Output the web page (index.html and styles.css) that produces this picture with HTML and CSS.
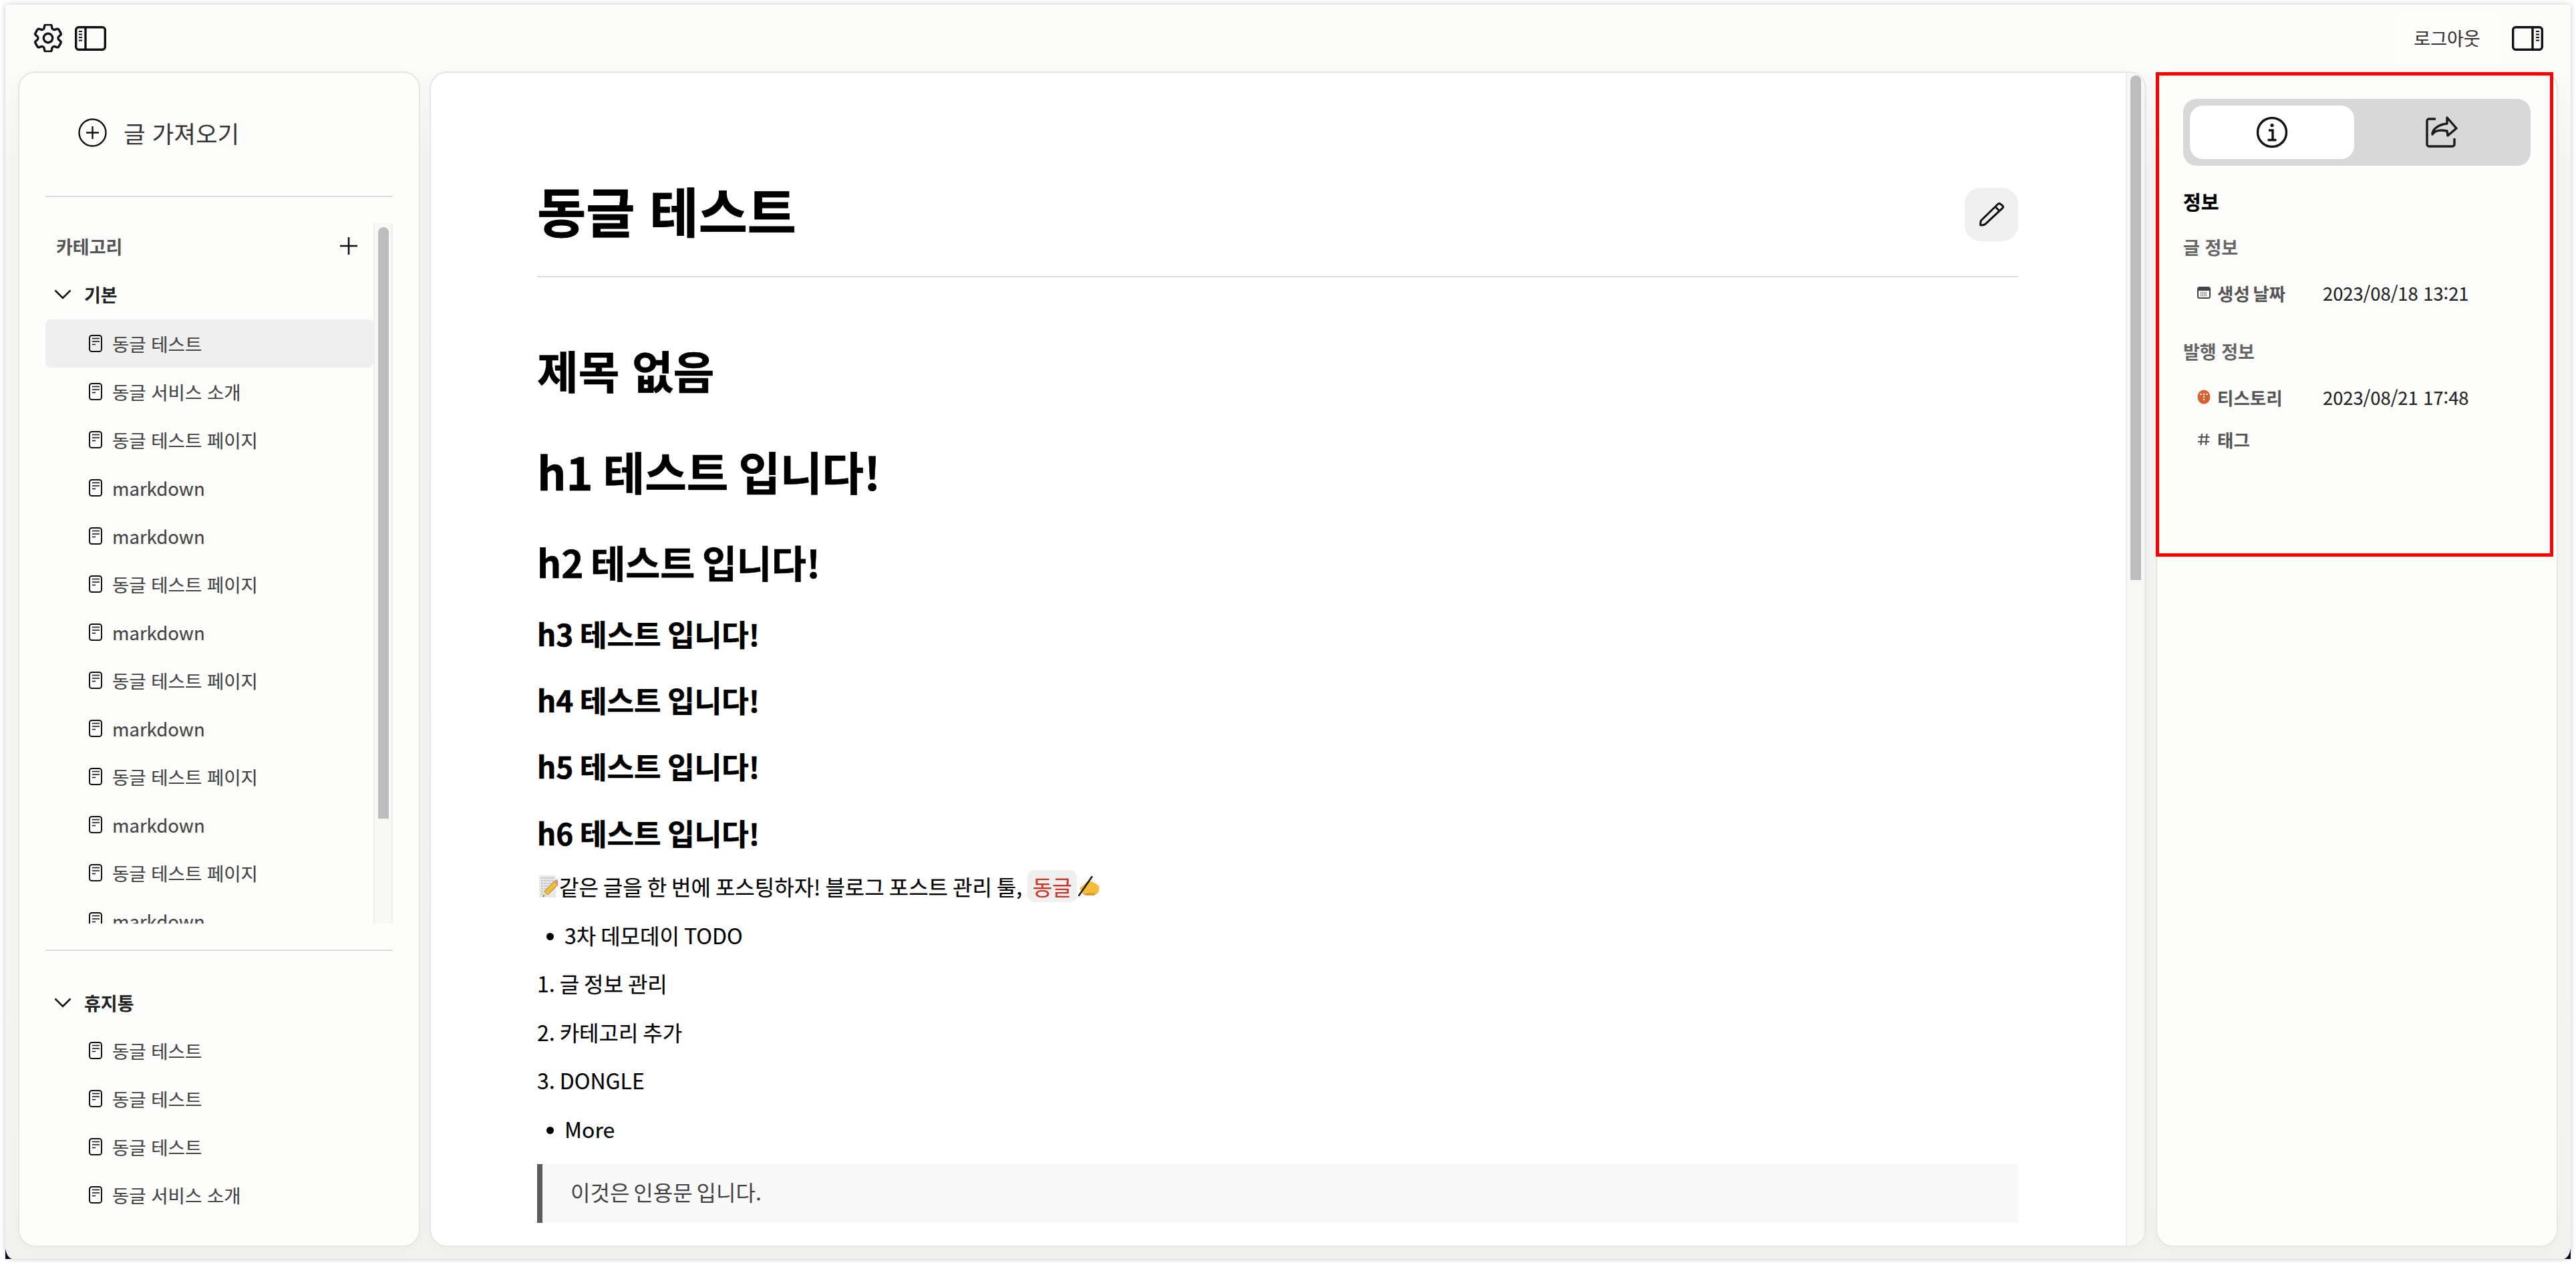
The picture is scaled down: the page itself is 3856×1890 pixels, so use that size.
FILE: index.html
```html
<!DOCTYPE html>
<html lang="ko">
<head>
<meta charset="utf-8">
<title>동글 테스트</title>
<link rel="stylesheet" href="styles.css">
</head>
<body>
<svg class="sprite" width="0" height="0" aria-hidden="true">
  <symbol id="doc" viewBox="0 0 20 26"><rect x="1" y="1" width="18" height="24" rx="3.5" fill="none" stroke="currentColor" stroke-width="2"/><path d="M5 5.500h11M5 10h11M5 14.500h5" fill="none" stroke="currentColor" stroke-width="1.7"/></symbol>
  <symbol id="chev" viewBox="0 0 26 15"><path d="M1.5 1.5 13 13 24.5 1.5" fill="none" stroke="currentColor" stroke-width="2.6"/></symbol>
</svg>
<div class="frame">
  <span class="corner corner-l"></span>
  <span class="corner corner-r"></span>
  <div class="window">
    <header class="topbar">
      <div class="topbar-group">
        <svg class="ic-gear" viewBox="2.6 2.6 18.8 18.8" fill="none" stroke="#111" stroke-width="1.5"><path d="M9.594 3.94c.09-.542.56-.94 1.11-.94h2.593c.55 0 1.02.398 1.11.94l.213 1.281c.063.374.313.686.645.87.074.04.147.083.22.127.324.196.72.257 1.075.124l1.217-.456a1.125 1.125 0 011.37.49l1.296 2.247a1.125 1.125 0 01-.26 1.431l-1.003.827c-.293.24-.438.613-.431.992a6.759 6.759 0 010 .255c-.007.378.138.75.43.99l1.005.828c.424.35.534.954.26 1.43l-1.298 2.247a1.125 1.125 0 01-1.369.491l-1.217-.456c-.355-.133-.75-.072-1.076.124a6.57 6.57 0 01-.22.128c-.331.183-.581.495-.644.869l-.213 1.28c-.09.543-.56.941-1.11.941h-2.594c-.55 0-1.02-.398-1.11-.94l-.213-1.281c-.062-.374-.312-.686-.644-.87a6.52 6.52 0 01-.22-.127c-.325-.196-.72-.257-1.076-.124l-1.217.456a1.125 1.125 0 01-1.369-.49l-1.297-2.247a1.125 1.125 0 01.26-1.431l1.004-.827c.292-.24.437-.613.43-.992a6.932 6.932 0 010-.255c.007-.378-.138-.75-.43-.99l-1.004-.828a1.125 1.125 0 01-.26-1.43l1.297-2.247a1.125 1.125 0 011.37-.491l1.216.456c.356.133.751.072 1.076-.124.072-.044.146-.087.22-.128.332-.183.582-.495.644-.869l.214-1.281z"/><circle cx="12" cy="12" r="3"/></svg>
        <svg class="ic-panel" viewBox="0 0 47 37" fill="none" stroke="#111" stroke-width="3.4"><rect x="1.7" y="1.7" width="43.6" height="33.6" rx="4"/><path d="M16 2v33"/><path d="M6 8h5M6 12.5h5M6 17h5M6 21.5h5" stroke-width="2"/></svg>
      </div>
      <div class="topbar-group">
        <span class="logout">로그아웃</span>
        <svg class="ic-panel" viewBox="0 0 47 37" fill="none" stroke="#111" stroke-width="3.4"><rect x="1.7" y="1.7" width="43.6" height="33.6" rx="4"/><path d="M31 2v33"/><path d="M36 8h5M36 12.5h5M36 17h5M36 21.5h5" stroke-width="2"/></svg>
      </div>
    </header>

    <div class="panels">
      <aside class="panel side">
        <div class="import">
          <svg class="ic-plus-circle" viewBox="0 0 43 43" fill="none" stroke="#111" stroke-width="2.4"><circle cx="21.5" cy="21.5" r="20"/><path d="M21.5 12v19M12 21.5h19"/></svg>
          <span>글 가져오기</span>
        </div>
        <div class="tree-wrap">
          <div class="tree">
            <div class="cat-head"><span>카테고리</span><svg class="ic-plus" viewBox="0 0 26 26" fill="none" stroke="#111" stroke-width="2.6"><path d="M13 0v26M0 13h26"/></svg></div>
            <div class="group"><svg class="ic-chev"><use href="#chev"/></svg><span>기본</span></div>
            <div class="item active"><svg class="ic-doc"><use href="#doc"/></svg><span>동글 테스트</span></div>
            <div class="item"><svg class="ic-doc"><use href="#doc"/></svg><span>동글 서비스 소개</span></div>
            <div class="item"><svg class="ic-doc"><use href="#doc"/></svg><span>동글 테스트 페이지</span></div>
            <div class="item"><svg class="ic-doc"><use href="#doc"/></svg><span>markdown</span></div>
            <div class="item"><svg class="ic-doc"><use href="#doc"/></svg><span>markdown</span></div>
            <div class="item"><svg class="ic-doc"><use href="#doc"/></svg><span>동글 테스트 페이지</span></div>
            <div class="item"><svg class="ic-doc"><use href="#doc"/></svg><span>markdown</span></div>
            <div class="item"><svg class="ic-doc"><use href="#doc"/></svg><span>동글 테스트 페이지</span></div>
            <div class="item"><svg class="ic-doc"><use href="#doc"/></svg><span>markdown</span></div>
            <div class="item"><svg class="ic-doc"><use href="#doc"/></svg><span>동글 테스트 페이지</span></div>
            <div class="item"><svg class="ic-doc"><use href="#doc"/></svg><span>markdown</span></div>
            <div class="item"><svg class="ic-doc"><use href="#doc"/></svg><span>동글 테스트 페이지</span></div>
            <div class="item"><svg class="ic-doc"><use href="#doc"/></svg><span>markdown</span></div>
          </div>
          <div class="track track-side"><div class="thumb thumb-side"></div></div>
        </div>
        <div class="trash">
          <div class="group group-trash"><svg class="ic-chev"><use href="#chev"/></svg><span>휴지통</span></div>
          <div class="item"><svg class="ic-doc"><use href="#doc"/></svg><span>동글 테스트</span></div>
          <div class="item"><svg class="ic-doc"><use href="#doc"/></svg><span>동글 테스트</span></div>
          <div class="item"><svg class="ic-doc"><use href="#doc"/></svg><span>동글 테스트</span></div>
          <div class="item"><svg class="ic-doc"><use href="#doc"/></svg><span>동글 서비스 소개</span></div>
        </div>
      </aside>

      <main class="panel main">
        <article class="article">
          <div class="title-row">
            <h1 class="title">동글 테스트</h1>
            <button class="edit" type="button"><svg viewBox="0 0 37 36" fill="none" stroke="#111" stroke-width="3"><path d="M26.5 3.5 2.5 27c-.8 1-1 4-.8 6.8 3 .3 5.6-.3 6.8-1.3L34.6 8.3c1-1 1-2.4 0-3.4l-3-2.6c-1.4-1.2-3.2-.8-5.1 1.2Z"/><path d="m24 6.5 6.5 7"/></svg></button>
          </div>
          <h2 class="h-none">제목 없음</h2>
          <h2 class="h1">h1 테스트 입니다!</h2>
          <h3 class="h2">h2 테스트 입니다!</h3>
          <h4 class="h3">h3 테스트 입니다!</h4>
          <h4 class="h4">h4 테스트 입니다!</h4>
          <h5 class="h5">h5 테스트 입니다!</h5>
          <h6 class="h6">h6 테스트 입니다!</h6>
          <p class="line first-line"><svg class="emoji" viewBox="0 0 28 33"><rect width="25" height="33" fill="#e8e8e6"/><path d="M3 4h19M3 8h19M3 12h17M3 16h13M3 20h10M3 24h7M3 28h5" stroke="#a5a5a3" stroke-width="1.1" stroke-dasharray="3 1"/><path d="M23 8.500 28 14 13 29 8 24Z" fill="#f6bd34" stroke="#7a5a1a" stroke-width=".8"/><path d="M23 8.500 25 6.500c1-.8 2-.7 2.500 0l.5 .5v5l-.6 2Z" fill="#e58a8a"/><path d="M8 24l5 5-7 3Z" fill="#e9cfa4"/><path d="M6.500 29.500 8 31l-2.500 1Z" fill="#222"/></svg><span>같은 글을 한 번에 포스팅하자! 블로그 포스트 관리 툴,</span><code class="chip">동글</code><svg class="emoji emoji-hand" viewBox="0 0 32 31"><path d="M2 18 14 8c5-1 12 2 17 7 1 4 0 9-2 11-7 2-15 2-22 1Z" fill="#f6bb3a"/><path d="M7 27c6-2 13-2 20-1l-3 3H12Z" fill="#d99a2a"/><path d="M20.500 1 1 29" stroke="#1a1a1a" stroke-width="2.6" stroke-linecap="round"/></svg></p>
          <p class="line bullet">3차 데모데이 TODO</p>
          <p class="line">1. 글 정보 관리</p>
          <p class="line">2. 카테고리 추가</p>
          <p class="line">3. DONGLE</p>
          <p class="line bullet">More</p>
          <blockquote class="quote">이것은 인용문 입니다.</blockquote>
        </article>
        <div class="track track-main"><div class="thumb thumb-main"></div></div>
      </main>

      <aside class="panel info">
        <div class="tabs">
          <div class="tab tab-on"><svg class="ic-tab" viewBox="0 0 48 48" fill="none" stroke="#111" stroke-width="3.4"><circle cx="24" cy="24" r="21.5"/><circle cx="24" cy="13.5" r="2.6" fill="#111" stroke="none"/><path d="M19 21h6v14M17.5 35.500h13"/></svg></div>
          <div class="tab"><svg class="ic-tab" viewBox="0 0 48 48" fill="none" stroke="#1a1a1a" stroke-width="3.4"><path d="M15 4H5a3 3 0 0 0-3 3v35a3 3 0 0 0 3 3h35a3 3 0 0 0 3-3v-9"/><path d="M32 2 46 18 33 29l-1-7C23 20 14 21 10 27c0-8 10-15 22-16Z" stroke-linejoin="round"/></svg></div>
        </div>
        <h3 class="info-title">정보</h3>
        <h4 class="info-sub">글 정보</h4>
        <div class="info-row"><svg class="ic-mini ic-cal" viewBox="0 0 20 18"><rect x="1" y="1" width="18" height="16" rx="2.500" fill="none" stroke="#444" stroke-width="2"/><path d="M1 3.500A2.500 2.500 0 0 1 3.500 1h13A2.500 2.500 0 0 1 19 3.500V6H1Z" fill="#444"/><path d="M5 8.500h10M5 11h10M5 13.500h10" stroke="#555" stroke-width="1.300" stroke-dasharray="1.300 1.200"/></svg><span class="info-key">생성 날짜</span><span class="info-val">2023/08/18 13:21</span></div>
        <h4 class="info-sub info-sub-2">발행 정보</h4>
        <div class="info-row"><svg class="ic-mini" viewBox="0 0 20 22"><ellipse cx="10" cy="11" rx="9.500" ry="10.500" fill="#d8602c"/><g fill="#fff"><circle cx="5.500" cy="7" r="1.300"/><circle cx="10" cy="7" r="1.300"/><circle cx="14.500" cy="7" r="1.300"/><circle cx="10" cy="11" r="1.300"/><circle cx="10" cy="15" r="1.300"/></g></svg><span class="info-key">티스토리</span><span class="info-val">2023/08/21 17:48</span></div>
        <div class="info-row info-row-tag"><svg class="ic-mini" viewBox="0 0 20 22" fill="none" stroke="#555" stroke-width="2.200"><path d="M7 3 5.500 20M14.500 3 13 20M1.500 8h17M1 15h17"/></svg><span class="info-key">태그</span></div>
        <div class="annotation"></div>
      </aside>
    </div>
  </div>
</div>
</body>
</html>
```
FILE: styles.css
```css
* { box-sizing: border-box; }
html, body { margin: 0; padding: 0; background: #fff; }
body { width: 3856px; height: 1890px; overflow: hidden; font-family: "Noto Sans CJK KR", "Noto Sans", sans-serif; color: #000; }
.sprite { position: absolute; }
.frame { position: relative; margin: 7px 8px 0; width: 3840px; height: 1877px; }
.corner { position: absolute; bottom: 0; width: 16px; height: 24px; background: #0a0a22; }
.corner-l { left: 0; }
.corner-r { right: 0; }
.window { position: relative; height: 100%; display: flex; flex-direction: column; background: #fcfcfa; border-radius: 2px 2px 12px 12px / 2px 2px 20px 20px; box-shadow: 0 0 8px rgba(0,0,0,.22); overflow: hidden; }

.topbar { height: 100px; flex: none; display: flex; justify-content: space-between; align-items: center; padding: 0 41px 0 42px; }
.topbar-group { display: flex; align-items: center; gap: 16px; }
.ic-gear { width: 44px; height: 42px; margin-right: 2px; }
.ic-panel { width: 47px; height: 37px; display: block; }
.logout { width: 162px; height: 79px; display: flex; align-items: center; justify-content: center; padding-bottom: 2px; font-size: 27px; color: #333; background: #fdfdfc; border-radius: 16px; -webkit-text-stroke: .2px #333; }

.panels { flex: 1; min-height: 0; display: flex; gap: 14px; padding: 0 19px 18px 19px; background: linear-gradient(#fbfbf9, #f5f5f3 140px, #f4f4f2 1700px, #f1f1ef); }
.panel { border: 2px solid #e6e6e4; border-radius: 26px; background: #fdfdfb; box-shadow: 0 0 20px rgba(0,0,0,.03); display: flex; position: relative; }

.side { width: 602px; flex: none; flex-direction: column; padding: 0 39px 0 39px; }
.import { height: 186px; flex: none; display: flex; align-items: center; gap: 25px; padding: 0 0 6px 49px; font-size: 35.5px; color: #333; border-bottom: 2px solid #dcdcdc; }
.ic-plus-circle { width: 43px; height: 43px; }
.tree-wrap { margin-top: 39px; height: 1048px; flex: none; display: flex; }
.tree { flex: 1; min-width: 0; overflow: hidden; }
.track { flex: none; background: #f8f8f7; border-left: 2px solid #ededec; border-right: 2px solid #f0f0ef; }
.track-side { width: 29px; padding: 6px 5px 0; }
.thumb { background: #bdbdbd; border-radius: 8px 8px 0 0; }
.thumb-side { width: 16px; height: 885px; }
.cat-head { height: 72px; display: flex; align-items: center; justify-content: space-between; padding: 0 24px 4px 16px; font-size: 27px; font-weight: 700; color: #555; }
.ic-plus { width: 26px; height: 26px; }
.group { height: 72px; display: flex; align-items: center; gap: 19px; padding: 0 0 4px 13px; font-size: 27px; font-weight: 700; color: #222; }
.group-trash { padding-bottom: 0; }
.ic-chev { width: 26px; height: 15px; color: #111; }
.item { height: 72px; display: flex; align-items: center; gap: 15px; padding: 0 0 1px 65px; font-size: 27.5px; color: #444; border-radius: 8px; -webkit-text-stroke: .2px #444; }
.item.active { background: #efefef; }
.ic-doc { width: 20px; height: 26px; color: #111; flex: none; }
.trash { margin-top: 39px; padding-top: 41px; border-top: 2px solid #dcdcdc; }

.main { flex: 1; min-width: 0; background: #fff; overflow: hidden; }
.article { flex: 1; min-width: 0; padding: 0 161px 0 159px; }
.title-row { height: 306px; padding: 172px 0 52px; display: flex; justify-content: space-between; align-items: center; border-bottom: 2px solid #dcdcdc; }
.title { margin: 0 0 14px; font-size: 79.5px; line-height: 80px; font-weight: 700; -webkit-text-stroke: .8px #000; }
.edit { width: 80px; height: 80px; border: 0; padding: 0; background: #f0f0f0; border-radius: 24px; display: flex; align-items: center; justify-content: center; }
.edit svg { width: 37px; height: 36px; }
.article h2, .article h3, .article h4, .article h5, .article h6 { margin: 0; font-weight: 700; color: #000; -webkit-text-stroke: .6px #000; }
.article .h-none { margin-top: 93px; font-size: 67px; line-height: 90px; }
.article .h1 { margin-top: 62px; font-size: 68px; line-height: 90px; word-spacing: -4px; }
.article .h2 { margin-top: 50px; font-size: 56.5px; line-height: 80px; word-spacing: -5px; }
.article .h3 { margin-top: 38px; font-size: 44px; line-height: 60px; word-spacing: -2.5px; }
.article .h4 { margin-top: 39px; font-size: 44px; line-height: 60px; word-spacing: -2.5px; }
.article .h5 { margin-top: 39px; font-size: 44px; line-height: 60px; word-spacing: -2.5px; }
.article .h6 { margin-top: 40px; font-size: 44px; line-height: 60px; word-spacing: -2.5px; }
.line { margin: 0; height: 72.5px; padding-bottom: 1px; display: flex; align-items: center; font-size: 32px; line-height: 1; white-space: pre; word-spacing: -2px; -webkit-text-stroke: .2px #000; }
.first-line { margin-top: 14.5px; }
.emoji { width: 28px; height: 33px; flex: none; margin-left: 3px; margin-right: 2px; }
.emoji-hand { width: 32px; height: 31px; margin-left: 2px; margin-right: 0; }
.chip { width: 74px; height: 48px; margin-left: 8px; display: flex; align-items: center; justify-content: center; background: #efefef; border-radius: 10px; color: #c9372c; font: inherit; -webkit-text-stroke: .2px #c9372c; }
.bullet { padding-left: 41px; position: relative; }
.bullet::before { content: ""; position: absolute; left: 14px; top: 33px; width: 11px; height: 11px; border-radius: 50%; background: #000; }
.quote { margin: 16px 0 0; height: 88px; padding: 0 0 5px 42px; display: flex; align-items: center; font-size: 32px; word-spacing: -3px; color: #444; background: #f9f9f9; border-left: 8px solid #5c5c5c; }
.track-main { width: 29px; padding: 4px 5px 0 5px; height: 100%; }
.thumb-main { width: 16px; height: 755px; }

.info { width: 602px; flex: none; flex-direction: column; padding: 39px 39px 0 39px; }
.tabs { height: 100px; flex: none; padding: 10px; background: #d8d8d8; border-radius: 20px; display: flex; gap: 8px; }
.tab { flex: 1; display: flex; align-items: center; justify-content: center; border-radius: 20px; }
.tab-on { background: #fff; }
.ic-tab { width: 48px; height: 48px; }
.info-title { margin: 36px 0 0; font-size: 29px; line-height: 34px; font-weight: 700; color: #000; -webkit-text-stroke: .3px #000; }
.info-sub { margin: 35px 0 0; font-size: 27px; line-height: 34px; font-weight: 700; color: #666; }
.info-sub-2 { margin-top: 54px; }
.info-row { margin-top: 34px; height: 34px; display: flex; align-items: center; padding-left: 21px; font-size: 27px; color: #222; }
.info-row-tag { margin-top: 29px; }
.ic-mini { width: 20px; height: 22px; flex: none; margin-right: 10px; }
.ic-cal { height: 18px; }
.info-key { width: 158px; flex: none; font-size: 26.5px; font-weight: 700; color: #555; word-spacing: -3px; }
.info-val { color: #222; font-size: 27.3px; -webkit-text-stroke: .2px #222; }
.annotation { position: absolute; left: -2px; top: -1px; width: 595px; height: 725px; border: 5px solid #f00; }
```
